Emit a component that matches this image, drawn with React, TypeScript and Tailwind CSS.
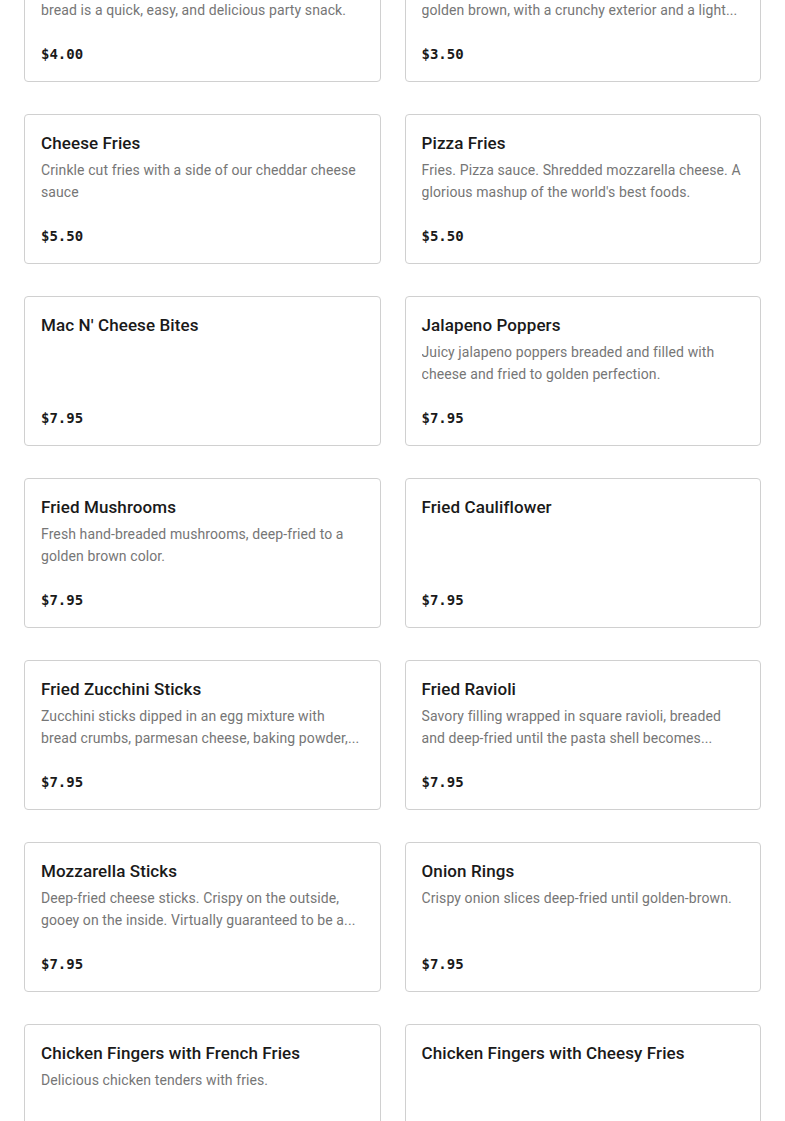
import React from "react";

type Item = { name: string; lines: string[]; price: string };

const items: Item[] = [
  {
    name: "Garlic Bread",
    lines: ["Warm and buttery, our freshly toasted garlic", "bread is a quick, easy, and delicious party snack."],
    price: "$4.00",
  },
  {
    name: "French Fries",
    lines: ["Fresh-cut potatoes fried until they turn", "golden brown, with a crunchy exterior and a light..."],
    price: "$3.50",
  },
  { name: "Cheese Fries", lines: ["Crinkle cut fries with a side of our cheddar cheese", "sauce"], price: "$5.50" },
  {
    name: "Pizza Fries",
    lines: ["Fries. Pizza sauce. Shredded mozzarella cheese. A", "glorious mashup of the world's best foods."],
    price: "$5.50",
  },
  { name: "Mac N' Cheese Bites", lines: [], price: "$7.95" },
  {
    name: "Jalapeno Poppers",
    lines: ["Juicy jalapeno poppers breaded and filled with", "cheese and fried to golden perfection."],
    price: "$7.95",
  },
  {
    name: "Fried Mushrooms",
    lines: ["Fresh hand-breaded mushrooms, deep-fried to a", "golden brown color."],
    price: "$7.95",
  },
  { name: "Fried Cauliflower", lines: [], price: "$7.95" },
  {
    name: "Fried Zucchini Sticks",
    lines: ["Zucchini sticks dipped in an egg mixture with", "bread crumbs, parmesan cheese, baking powder,..."],
    price: "$7.95",
  },
  {
    name: "Fried Ravioli",
    lines: ["Savory filling wrapped in square ravioli, breaded", "and deep-fried until the pasta shell becomes..."],
    price: "$7.95",
  },
  {
    name: "Mozzarella Sticks",
    lines: ["Deep-fried cheese sticks. Crispy on the outside,", "gooey on the inside. Virtually guaranteed to be a..."],
    price: "$7.95",
  },
  { name: "Onion Rings", lines: ["Crispy onion slices deep-fried until golden-brown."], price: "$7.95" },
  { name: "Chicken Fingers with French Fries", lines: ["Delicious chicken tenders with fries."], price: "$9.95" },
  { name: "Chicken Fingers with Cheesy Fries", lines: [], price: "$10.95" },
];

function Card({ item }: { item: Item }) {
  return (
    <div className="flex h-[150px] flex-col rounded-[4px] border border-[#d0d0d0] bg-white px-4 pt-4 pb-[17px]">
      <div className="text-[17px] font-medium leading-[24px] tracking-[0.1px] text-[#1a1a1a]">{item.name}</div>
      <div className="mt-[4px] flex h-[44px] flex-col overflow-hidden text-[14px] leading-[22px] tracking-[0.1px] text-[#767676]">
        {item.lines.map((l, i) => (
          <span key={i} className="whitespace-nowrap">
            {l}
          </span>
        ))}
      </div>
      <div className="mt-auto font-['DejaVu_Sans_Mono',monospace] text-[14px] font-bold leading-[20px] text-[#1a1a1a]">
        {item.price}
      </div>
    </div>
  );
}

export default function App() {
  return (
    <div className="min-h-screen overflow-hidden bg-white font-['Roboto',Arial,sans-serif]">
      <div className="mt-[-68px] grid grid-cols-2 gap-x-6 gap-y-8 px-6">
        {items.map((it) => (
          <Card key={it.name} item={it} />
        ))}
      </div>
    </div>
  );
}
